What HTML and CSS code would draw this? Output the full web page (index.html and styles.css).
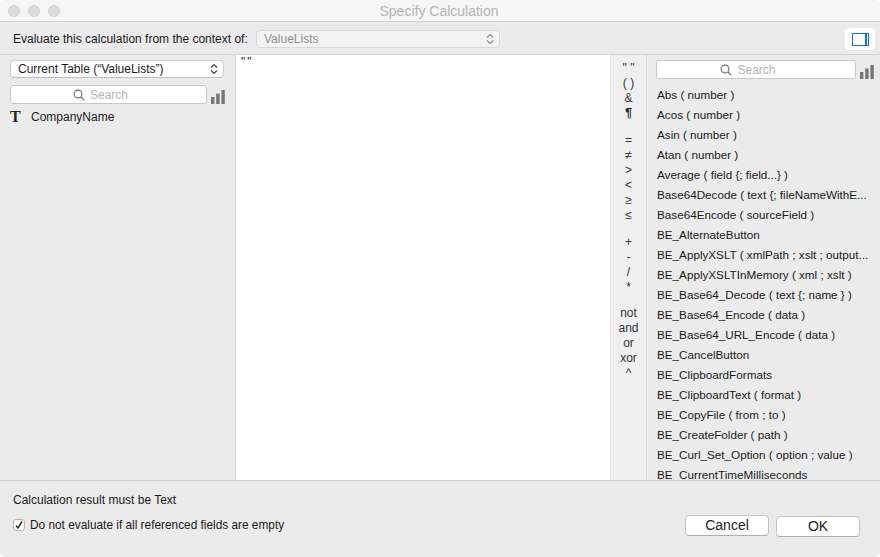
FILE: index.html
```html
<!DOCTYPE html>
<html lang="en">
<head>
<meta charset="utf-8">
<title>Specify Calculation</title>
<link rel="stylesheet" href="styles.css">
</head>
<body>
<div class="window">
  <header class="titlebar">
    <div class="lights"><span class="light"></span><span class="light"></span><span class="light"></span></div>
    <div class="title">Specify Calculation</div>
  </header>
  <div class="toolbar">
    <span class="context-label">Evaluate this calculation from the context of:</span>
    <div class="select select-context">
      <span>ValueLists</span>
      <svg class="updown" width="8" height="12" viewBox="0 0 8 12"><path d="M1 4.5 4 1.5 7 4.5M1 7.5 4 10.5 7 7.5" fill="none" stroke="currentColor" stroke-width="1.2"/></svg>
    </div>
    <div class="panel-toggle">
      <svg width="17" height="13" viewBox="0 0 17 13"><rect x="0.5" y="0.5" width="16" height="12" fill="#fff" stroke="#0a6cff"/><rect x="13" y="1" width="2" height="11" fill="#0a6cff"/></svg>
    </div>
  </div>
  <main class="main">
    <aside class="fields">
      <div class="select select-table">
        <span>Current Table (“ValueLists”)</span>
        <svg class="updown dark" width="8" height="12" viewBox="0 0 8 12"><path d="M1 4.5 4 1.5 7 4.5M1 7.5 4 10.5 7 7.5" fill="none" stroke="currentColor" stroke-width="1.2"/></svg>
      </div>
      <div class="search-row">
        <div class="search">
          <svg width="12" height="12" viewBox="0 0 12 12"><circle cx="5" cy="5" r="3.9" fill="none" stroke="#6f6f6f" stroke-width="1.1"/><path d="M8 8 11.3 11.3" stroke="#6f6f6f" stroke-width="1.2"/></svg>
          <span>Search</span>
        </div>
        <svg class="bars" width="14" height="14" viewBox="0 0 14 14"><rect x="0" y="7" width="3.4" height="7"/><rect x="5.2" y="3.5" width="3.4" height="10.5"/><rect x="10.4" y="0" width="3.4" height="14"/></svg>
      </div>
      <div class="field-row"><span class="t-icon">T</span><span>CompanyName</span></div>
    </aside>
    <section class="editor"><div class="formula">""</div></section>
    <nav class="operators">
      <div class="op-group"><span class="op">" "</span><span class="op">( )</span><span class="op">&amp;</span><span class="op op-pilcrow">¶</span></div>
      <div class="op-group"><span class="op">=</span><span class="op">≠</span><span class="op">&gt;</span><span class="op">&lt;</span><span class="op">≥</span><span class="op">≤</span></div>
      <div class="op-group op-group-tight"><span class="op">+</span><span class="op">-</span><span class="op">/</span><span class="op">*</span></div>
      <div class="op-group"><span class="op">not</span><span class="op">and</span><span class="op">or</span><span class="op">xor</span><span class="op">^</span></div>
    </nav>
    <aside class="functions">
      <div class="search-row">
        <div class="search">
          <svg width="12" height="12" viewBox="0 0 12 12"><circle cx="5" cy="5" r="3.9" fill="none" stroke="#6f6f6f" stroke-width="1.1"/><path d="M8 8 11.3 11.3" stroke="#6f6f6f" stroke-width="1.2"/></svg>
          <span>Search</span>
        </div>
        <svg class="bars" width="14" height="14" viewBox="0 0 14 14"><rect x="0" y="7" width="3.4" height="7"/><rect x="5.2" y="3.5" width="3.4" height="10.5"/><rect x="10.4" y="0" width="3.4" height="14"/></svg>
      </div>
      <ul class="fn-list">
        <li>Abs ( number )</li>
        <li>Acos ( number )</li>
        <li>Asin ( number )</li>
        <li>Atan ( number )</li>
        <li>Average ( field {; field...} )</li>
        <li>Base64Decode ( text {; fileNameWithE...</li>
        <li>Base64Encode ( sourceField )</li>
        <li>BE_AlternateButton</li>
        <li>BE_ApplyXSLT ( xmlPath ; xslt ; output...</li>
        <li>BE_ApplyXSLTInMemory ( xml ; xslt )</li>
        <li>BE_Base64_Decode ( text {; name } )</li>
        <li>BE_Base64_Encode ( data )</li>
        <li>BE_Base64_URL_Encode ( data )</li>
        <li>BE_CancelButton</li>
        <li>BE_ClipboardFormats</li>
        <li>BE_ClipboardText ( format )</li>
        <li>BE_CopyFile ( from ; to )</li>
        <li>BE_CreateFolder ( path )</li>
        <li>BE_Curl_Set_Option ( option ; value )</li>
        <li>BE_CurrentTimeMilliseconds</li>
      </ul>
    </aside>
  </main>
  <footer class="footer">
    <div class="result-options">
      <div class="result-text">Calculation result must be Text</div>
      <label class="check-row">
        <span class="checkbox"><svg width="10" height="10" viewBox="0 0 10 10"><path d="M2 5.5 4 8 8 1.5" fill="none" stroke="#333" stroke-width="1.5"/></svg></span>
        <span>Do not evaluate if all referenced fields are empty</span>
      </label>
    </div>
    <div class="actions">
      <button class="btn btn-cancel">Cancel</button>
      <button class="btn btn-ok">OK</button>
    </div>
  </footer>
</div>
</body>
</html>
```
FILE: styles.css
```css
* { box-sizing: border-box; }
html, body { margin: 0; padding: 0; }
body {
  width: 880px;
  height: 557px;
  overflow: hidden;
  background: #fff;
  font-family: "Liberation Sans", Arial, sans-serif;
  font-size: 12px;
  color: #1a1a1a;
}
.window {
  width: 880px;
  height: 557px;
  display: flex;
  flex-direction: column;
  background: #ebebeb;
  border-radius: 5px;
  overflow: hidden;
}
.titlebar {
  height: 22px;
  flex: none;
  position: relative;
  display: flex;
  align-items: center;
  justify-content: center;
  padding-right: 2px;
  background: #f6f6f6;
  border-bottom: 1px solid #d2d2d2;
}
.lights {
  position: absolute;
  left: 8px;
  top: 5px;
  display: flex;
  gap: 8px;
}
.light {
  width: 12px;
  height: 12px;
  border-radius: 50%;
  background: #dcdcdc;
  border: 1px solid #d0d0d0;
}
.title { font-size: 14px; color: #b4b4b4; }
.toolbar {
  height: 33px;
  flex: none;
  display: flex;
  align-items: center;
  padding: 2px 13px 0;
  border-bottom: 1px solid #d2d2d2;
}
.context-label { width: 243px; flex: none; }
.select {
  display: flex;
  align-items: center;
  justify-content: space-between;
  height: 18px;
  background: #fff;
  border: 1px solid #cfcfcf;
  border-bottom-color: #bdbdbd;
  border-radius: 4px;
  padding: 0 5px 0 7px;
}
.select-context {
  width: 244px;
  background: #f3f3f3;
  border-color: #d8d8d8;
  color: #8e8e8e;
}
.updown { color: #8a8a8a; flex: none; }
.updown.dark { color: #444; }
.panel-toggle {
  margin-left: auto;
  margin-right: -8px;
  width: 30px;
  height: 22px;
  background: #fff;
  border-radius: 4px;
  display: flex;
  align-items: center;
  justify-content: center;
}
.main {
  flex: 1;
  min-height: 0;
  display: flex;
}
.fields {
  width: 236px;
  flex: none;
  padding: 5px 10px 0;
  border-right: 1px solid #d6d6d6;
}
.select-table { width: 214px; }
.search-row {
  display: flex;
  align-items: center;
  justify-content: space-between;
  margin-top: 7px;
}
.search {
  width: 197px;
  height: 19px;
  background: #fff;
  border: 1px solid #c8c8c8;
  border-radius: 3px;
  display: flex;
  align-items: center;
  justify-content: center;
  gap: 5px;
  padding-right: 16px;
  color: #b5b5b5;
}
.bars { fill: #777; flex: none; margin-top: 4px; }
.field-row {
  display: flex;
  align-items: center;
  margin-top: 3px;
  height: 20px;
}
.t-icon {
  width: 21px;
  font-family: "Liberation Serif", serif;
  font-weight: bold;
  font-size: 16px;
  color: #222;
}
.editor {
  width: 374px;
  flex: none;
  background: #fff;
  padding: 0 5px;
}
.formula { line-height: 14px; letter-spacing: 2px; color: #222; }
.operators {
  width: 37px;
  flex: none;
  background: #efefef;
  border-left: 1px solid #e4e4e4;
  border-right: 1px solid #d6d6d6;
  padding-top: 6px;
  display: flex;
  flex-direction: column;
  align-items: center;
  color: #333;
}
.op-group {
  display: flex;
  flex-direction: column;
  align-items: center;
  margin-bottom: 12px;
}
.op-group-tight { margin-bottom: 11px; }
.op { height: 15px; line-height: 15px; }
.op-pilcrow { font-weight: bold; color: #222; }
.functions {
  width: 234px;
  flex: none;
  padding: 0 10px 0 9px;
  overflow: hidden;
}
.functions .search-row { margin-top: 5px; }
.functions .search { width: 200px; }
.functions .bars { margin-right: -3px; }
.fn-list {
  list-style: none;
  margin: 6px -10px 0 1px;
  padding: 0;
  font-size: 11.7px;
}
.fn-list li { height: 20px; line-height: 20px; white-space: nowrap; }
.footer {
  height: 77px;
  flex: none;
  display: flex;
  justify-content: space-between;
  border-top: 1px solid #d2d2d2;
  padding: 0 20px 0 13px;
}
.result-options { padding-top: 12px; }
.result-text { line-height: 14px; }
.check-row { display: flex; align-items: center; gap: 5px; margin-top: 11px; height: 14px; font-size: 11.85px; }
.checkbox {
  width: 12px;
  height: 12px;
  background: #fff;
  border: 1px solid #b5b5b5;
  border-radius: 3px;
  display: flex;
  align-items: center;
  justify-content: center;
}
.actions { display: flex; align-items: flex-start; gap: 7px; padding-top: 34px; }
.btn {
  width: 84px;
  height: 21px;
  padding: 0 0 2px;
  background: #fff;
  border: 1px solid #c4c4c4;
  border-bottom-color: #adadad;
  border-radius: 4px;
  font-family: inherit;
  font-size: 14px;
  line-height: 16px;
  color: #222;
}
.btn-ok { margin-top: 1px; }
```
